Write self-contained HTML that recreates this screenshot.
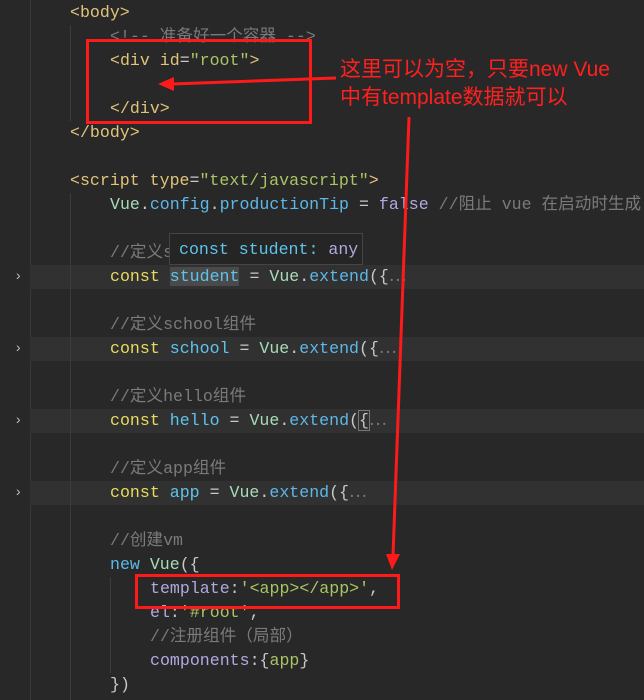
<!DOCTYPE html>
<html><head><meta charset="utf-8"><style>
html,body{margin:0;width:644px;height:700px;overflow:hidden}
body{background:#282828;position:relative;font-family:"Liberation Mono","Noto Sans CJK SC",monospace;font-size:16.6px;}
#w{position:absolute;left:0;top:0;width:644px;height:700px;overflow:hidden}
.l{position:absolute;left:0;height:24px;line-height:24px;white-space:pre;color:#d4d4d4}
.hl{position:absolute;left:30px;right:0;height:24px;background:#313131}
.gut{position:absolute;left:30px;top:0;width:1px;height:700px;background:#3a3a3a}
.g{position:absolute;width:1px;background:#3c3c3c}
.f{position:absolute;left:14px;color:#bbb;font-size:14px;height:24px;line-height:24px}
.t{color:#e0c47a}.p{color:#c8c8c8}.s{color:#a9c464}.c{color:#7a7a7a}.k{color:#e8da5e}.v{color:#5ec4ec}.vu{color:#a8dcb8}.m{color:#5cb8e8}.pu{color:#b2a8e0}
.box{position:absolute;border:3px solid #ff1a1a}
.note{position:absolute;color:#ff2020;font-family:"Liberation Sans","Noto Sans CJK SC",sans-serif;font-size:21px;line-height:28px;white-space:nowrap}
.tip{position:absolute;left:169px;top:233px;width:194px;height:32px;background:#252525;border:1px solid #454545;color:#5ec4ec;line-height:32px;padding-left:9px;box-sizing:border-box;white-space:pre}
</style></head><body><div id="w">
<div class="gut"></div>
<div class="hl" style="top:265px"></div>
<div class="hl" style="top:337px"></div>
<div class="hl" style="top:409px"></div>
<div class="hl" style="top:481px"></div>
<div class="g" style="left:70px;top:25px;height:96px"></div>
<div class="g" style="left:70px;top:193px;height:507px"></div>
<div class="g" style="left:110px;top:577px;height:96px"></div>
<div class="f" style="top:265px">›</div><div class="f" style="top:337px">›</div><div class="f" style="top:409px">›</div><div class="f" style="top:481px">›</div>

<div class="l" style="top:1px;left:70px"><span class="t">&lt;body&gt;</span></div>
<div class="l" style="top:25px;left:110px"><span class="c">&lt;!-- 准备好一个容器 --&gt;</span></div>
<div class="l" style="top:49px;left:110px"><span class="t">&lt;div id</span><span class="p">=</span><span class="s">"root"</span><span class="t">&gt;</span></div>
<div class="l" style="top:97px;left:110px"><span class="t">&lt;/div&gt;</span></div>
<div class="l" style="top:121px;left:70px"><span class="t">&lt;/body&gt;</span></div>
<div class="l" style="top:169px;left:70px"><span class="t">&lt;script type</span><span class="p">=</span><span class="s">"text/javascript"</span><span class="t">&gt;</span></div>
<div class="l" style="top:193px;left:110px"><span class="vu">Vue</span><span class="p">.</span><span class="m">config</span><span class="p">.</span><span class="m">productionTip</span><span class="p"> = </span><span class="pu">false</span> <span class="c">//阻止 vue 在启动时生成</span></div>
<div class="l" style="top:241px;left:110px"><span class="c">//定义student组件</span></div>
<div class="l" style="top:265px;left:110px"><span class="k">const</span> <span class="v" style="background:#4a4a4a">student</span><span class="p"> = </span><span class="vu">Vue</span><span class="p">.</span><span class="m">extend</span><span class="p">({</span><span class="c">⋯</span></div>
<div class="l" style="top:313px;left:110px"><span class="c">//定义school组件</span></div>
<div class="l" style="top:337px;left:110px"><span class="k">const</span> <span class="v">school</span><span class="p"> = </span><span class="vu">Vue</span><span class="p">.</span><span class="m">extend</span><span class="p">({</span><span class="c">⋯</span></div>
<div class="l" style="top:385px;left:110px"><span class="c">//定义hello组件</span></div>
<div class="l" style="top:409px;left:110px"><span class="k">const</span> <span class="v">hello</span><span class="p"> = </span><span class="vu">Vue</span><span class="p">.</span><span class="m">extend</span><span class="p">(<span style="outline:1px solid #777">{</span></span><span class="c">⋯</span></div>
<div class="l" style="top:457px;left:110px"><span class="c">//定义app组件</span></div>
<div class="l" style="top:481px;left:110px"><span class="k">const</span> <span class="v">app</span><span class="p"> = </span><span class="vu">Vue</span><span class="p">.</span><span class="m">extend</span><span class="p">({</span><span class="c">⋯</span></div>
<div class="l" style="top:529px;left:110px"><span class="c">//创建vm</span></div>
<div class="l" style="top:553px;left:110px"><span class="m">new</span> <span class="vu">Vue</span><span class="p">({</span></div>
<div class="l" style="top:577px;left:150px"><span class="pu">template</span><span class="p">:</span><span class="s">'&lt;app&gt;&lt;/app&gt;'</span><span class="p">,</span></div>
<div class="l" style="top:601px;left:150px"><span class="pu">el</span><span class="p">:</span><span class="s">'#root'</span><span class="p">,</span></div>
<div class="l" style="top:625px;left:150px"><span class="c">//注册组件（局部）</span></div>
<div class="l" style="top:649px;left:150px"><span class="pu">components</span><span class="p">:{</span><span class="s">app</span><span class="p">}</span></div>
<div class="l" style="top:673px;left:110px"><span class="p">})</span></div>

<div class="tip">const student: <span class="pu">any</span></div>

<div class="box" style="left:86px;top:39px;width:220px;height:79px"></div>
<div class="box" style="left:135px;top:574px;width:259px;height:29px"></div>
<div class="note" style="left:340px;top:56px">这里可以为空，只要new Vue</div>
<div class="note" style="left:340px;top:84px">中有template数据就可以</div>
<svg style="position:absolute;left:0;top:0" width="644" height="700">
<line x1="336" y1="78" x2="172" y2="84" stroke="#ff1a1a" stroke-width="3"/>
<polygon points="158,84 174,77 174,91" fill="#ff1a1a"/>
<line x1="409" y1="117" x2="393" y2="556" stroke="#ff1a1a" stroke-width="3"/>
<polygon points="392,570 386,554 400,554" fill="#ff1a1a"/>
</svg>
</div></body></html>
